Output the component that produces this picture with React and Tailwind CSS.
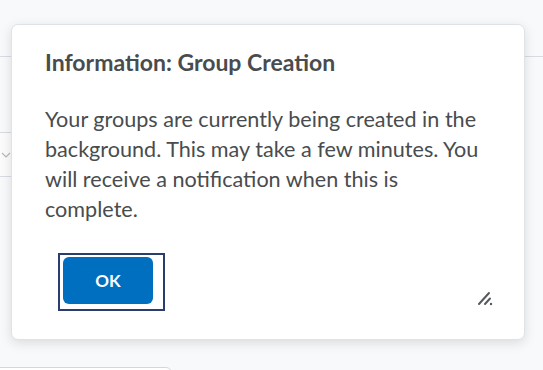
import React from 'react';

function ResizeGrip() {
  return (
    <svg width="16" height="16" viewBox="0 0 16 16" className="text-[#565a5c]">
      <path d="M2 14 L12 3" stroke="currentColor" strokeWidth="2" strokeLinecap="round" />
      <path d="M8 14 L13 8.5" stroke="currentColor" strokeWidth="2" strokeLinecap="round" />
      <circle cx="14" cy="14" r="1.2" fill="currentColor" />
    </svg>
  );
}

export default function App() {
  return (
    <div
      className="relative w-[543px] h-[370px] overflow-hidden bg-[#f8f9fb]"
      style={{ fontFamily: 'Lato, "Open Sans", sans-serif' }}
    >
      {/* page behind the dialog */}
      <div className="flex flex-col">
        <div className="mt-[56px] h-px bg-[#d8dce2]" />
        <div className="mt-[75px] ml-[-10px] w-[40px] h-[45px] border border-[#d8dce2] bg-[#fbfbfc] rounded-[4px] flex items-center pl-[10px]">
          <svg width="10" height="8" viewBox="0 0 10 8" className="text-[#b5b9be]">
            <path d="M1 2 L5 6 L9 2" stroke="currentColor" strokeWidth="1.2" fill="none" />
          </svg>
        </div>
        <div className="mt-[190px] ml-[-10px] w-[182px] h-[30px] border border-[#d3d7dc] rounded-[6px] bg-white" />
      </div>

      {/* dialog */}
      <div className="absolute left-[11px] top-[24px] w-[514px] h-[316px] bg-white border border-[#dfe3e8] rounded-[7px] shadow-[0_3px_12px_rgba(0,0,0,0.12)] flex flex-col pl-[33px] pr-[31px]">
        <h2 className="mt-[23px] text-[23px] leading-[28px] font-bold text-[#494c4e]">
          Information: Group Creation
        </h2>
        <p className="mt-[28px] w-[442px] text-[21.6px] leading-[30px] text-[#494c4e]">
          Your groups are currently being created in the background. This may take a few minutes. You will receive a notification when this is complete.
        </p>
        <div className="mt-[29px] ml-[13px] flex items-end justify-between">
          <div className="border-2 border-[#2b3e6b] pl-[3px] pt-[2px] pr-[10px] pb-[5px]">
            <button className="w-[90px] h-[47px] rounded-[6px] bg-[#006fbf] text-white text-[17px] font-bold">
              OK
            </button>
          </div>
          <div className="mb-[5px]">
            <ResizeGrip />
          </div>
        </div>
      </div>
    </div>
  );
}
